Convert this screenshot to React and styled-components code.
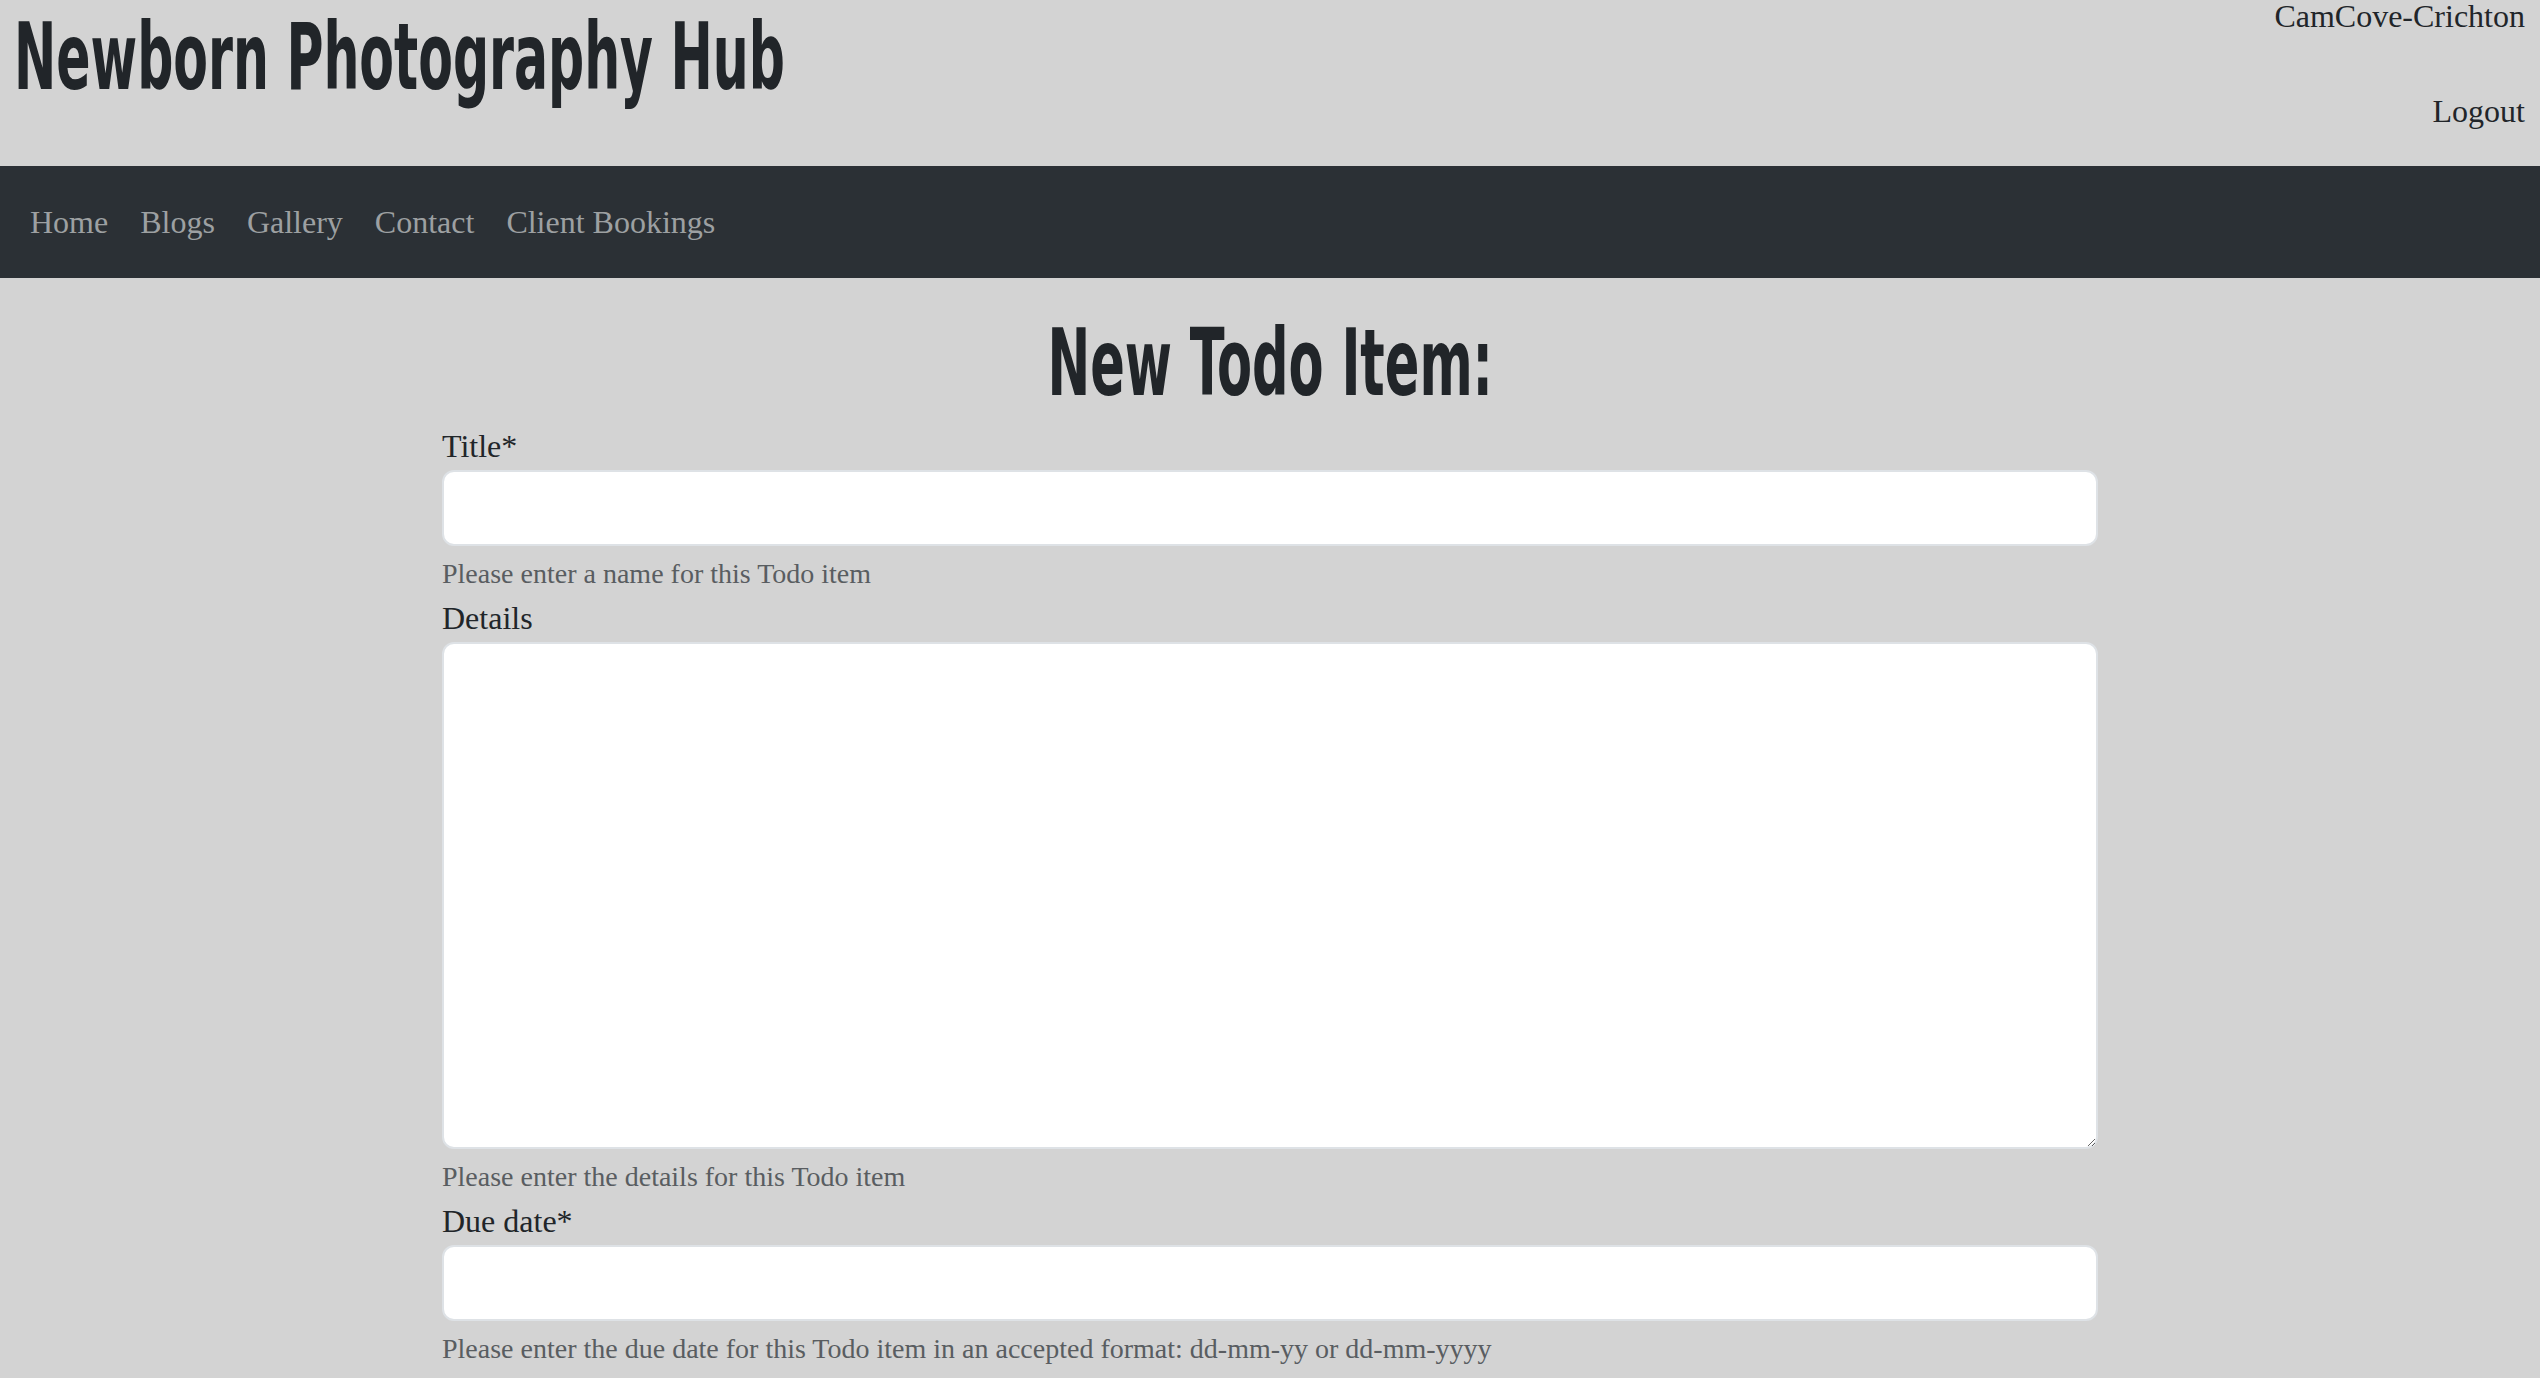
import React from 'react';
import styled, { createGlobalStyle } from 'styled-components';

const GlobalStyle = createGlobalStyle`
  html, body {
    margin: 0;
    padding: 0;
    background: #d3d3d3;
  }
  body {
    font-family: 'Liberation Serif', 'DejaVu Serif', serif;
    font-size: 32px;
    line-height: 1.5;
    color: #212529;
  }
  * {
    box-sizing: border-box;
  }
`;

const displayFont = `'DejaVu Sans Condensed', 'Liberation Sans', sans-serif`;

const Header = styled.header`
  display: flex;
  justify-content: space-between;
  align-items: flex-start;
  height: 166px;
  padding: 0 15px 0 14px;
`;

const SiteTitle = styled.h1`
  margin: 0;
  font-family: ${displayFont};
  font-weight: 700;
  font-size: 92px;
  line-height: 116px;
  white-space: nowrap;
  transform: scaleX(0.61);
  transform-origin: left center;
  color: #212529;
`;

const UserBox = styled.div`
  display: flex;
  flex-direction: column;
  align-items: flex-end;
  line-height: 32px;
  font-size: 32px;
`;

const UserName = styled.span``;

const LogoutLink = styled.a`
  margin-top: 63px;
  color: #212529;
  text-decoration: none;
`;

const NavBar = styled.nav`
  display: flex;
  align-items: center;
  height: 112px;
  padding: 0 14px;
  background: #2b3035;
`;

const NavLink = styled.a`
  padding: 0 16px;
  line-height: 48px;
  color: #9da0a2;
  text-decoration: none;
  font-size: 32px;
`;

const Main = styled.main`
  max-width: 1656px;
  margin: 0 auto;
`;

const PageTitle = styled.h1`
  margin: 27px 0 1px;
  text-align: center;
  font-family: ${displayFont};
  font-weight: 700;
  font-size: 93px;
  line-height: 116px;
  color: #212529;
  span {
    display: inline-block;
    white-space: nowrap;
    transform: scaleX(0.61);
  }
`;

const Field = styled.div`
  display: flex;
  flex-direction: column;
`;

const Label = styled.label`
  font-size: 32px;
  line-height: 48px;
  color: #212529;
`;

const TextInput = styled.input`
  height: 76px;
  width: 100%;
  background: #fff;
  border: 2px solid #dee2e6;
  border-radius: 12px;
  padding: 12px 24px;
  font: inherit;
  outline: none;
`;

const TextArea = styled.textarea`
  height: 507px;
  width: 100%;
  background: #fff;
  border: 2px solid #dee2e6;
  border-radius: 12px;
  padding: 12px 24px;
  font: inherit;
  outline: none;
  resize: vertical;
`;

const HelpText = styled.div`
  margin-top: 7px;
  font-size: 28px;
  line-height: 41px;
  color: #595d61;
`;

export default function App() {
  const links = ['Home', 'Blogs', 'Gallery', 'Contact', 'Client Bookings'];
  return (
    <>
      <GlobalStyle />
      <Header>
        <SiteTitle>Newborn Photography Hub</SiteTitle>
        <UserBox>
          <UserName>CamCove-Crichton</UserName>
          <LogoutLink href="#">Logout</LogoutLink>
        </UserBox>
      </Header>
      <NavBar>
        {links.map(l => (
          <NavLink key={l} href="#">
            {l}
          </NavLink>
        ))}
      </NavBar>
      <Main>
        <PageTitle>
          <span>New Todo Item:</span>
        </PageTitle>
        <form>
          <Field>
            <Label htmlFor="title">Title*</Label>
            <TextInput id="title" type="text" />
            <HelpText>Please enter a name for this Todo item</HelpText>
          </Field>
          <Field>
            <Label htmlFor="details">Details</Label>
            <TextArea id="details" />
            <HelpText>Please enter the details for this Todo item</HelpText>
          </Field>
          <Field>
            <Label htmlFor="due">Due date*</Label>
            <TextInput id="due" type="text" />
            <HelpText>
              Please enter the due date for this Todo item in an accepted format: dd-mm-yy or dd-mm-yyyy
            </HelpText>
          </Field>
        </form>
      </Main>
    </>
  );
}
